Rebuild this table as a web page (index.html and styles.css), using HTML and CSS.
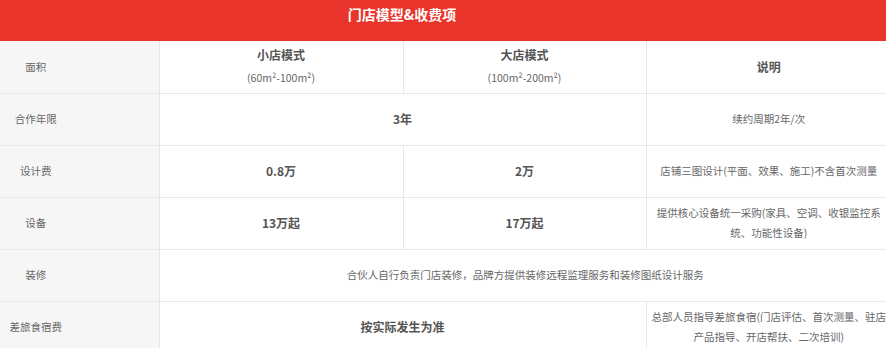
FILE: index.html
```html
<!DOCTYPE html>
<html lang="zh">
<head>
<meta charset="utf-8">
<title>门店模型&收费项</title>
<link rel="stylesheet" href="styles.css">
</head>
<body>
<div class="page">
  <div class="banner"><span class="banner-title">门店模型&amp;收费项</span></div>
  <table class="fee-table">
    <colgroup>
      <col class="c1"><col class="c2"><col class="c3"><col class="c4">
    </colgroup>
    <tr>
      <td class="label">面积</td>
      <td class="val"><div class="mode">小店模式</div><div class="size">(60m²-100m²)</div></td>
      <td class="val"><div class="mode">大店模式</div><div class="size">(100m²-200m²)</div></td>
      <td class="val"><div class="mode">说明</div></td>
    </tr>
    <tr>
      <td class="label">合作年限</td>
      <td class="val strong" colspan="2">3年</td>
      <td class="note">续约周期2年/次</td>
    </tr>
    <tr>
      <td class="label">设计费</td>
      <td class="val strong">0.8万</td>
      <td class="val strong">2万</td>
      <td class="note">店铺三图设计(平面、效果、施工)不含首次测量</td>
    </tr>
    <tr>
      <td class="label">设备</td>
      <td class="val strong">13万起</td>
      <td class="val strong">17万起</td>
      <td class="note">提供核心设备统一采购(家具、空调、收银监控系统、功能性设备)</td>
    </tr>
    <tr>
      <td class="label">装修</td>
      <td class="note" colspan="3">合伙人自行负责门店装修，品牌方提供装修远程监理服务和装修图纸设计服务</td>
    </tr>
    <tr>
      <td class="label">差旅食宿费</td>
      <td class="val strong" colspan="2">按实际发生为准</td>
      <td class="note nowrap">总部人员指导差旅食宿(门店评估、首次测量、驻店<br>产品指导、开店帮扶、二次培训)</td>
    </tr>
  </table>
</div>
</body>
</html>
```

FILE: styles.css
```css
html, body {
  margin: 0;
  padding: 0;
  background: #fff;
  overflow: hidden;
}

.page {
  width: 891px;
  font-family: "Noto Sans CJK SC", "Noto Sans", sans-serif;
  color: #666;
}

.banner {
  height: 41px;
  background: #e8342a;
  box-sizing: border-box;
  padding: 0 87px 0 0;
  text-align: center;
}

.banner-title {
  color: #fff;
  font-size: 14px;
  font-weight: bold;
  line-height: 28px;
}

.fee-table {
  width: 891px;
  table-layout: fixed;
  border-collapse: collapse;
}

.c1 { width: 159px; }
.c2 { width: 244px; }
.c3 { width: 243px; }
.c4 { width: 245px; }

.fee-table td {
  height: 52px;
  box-sizing: border-box;
  border-bottom: 1px solid #e8e8e8;
  border-left: 1px solid #e8e8e8;
  padding: 0 3px;
  text-align: center;
  vertical-align: middle;
  font-size: 10.5px;
  line-height: 20px;
  color: #666;
}

.fee-table td.label {
  border-left: none;
  background: #f6f6f6;
  padding: 0 87px 0 0;
}

.mode {
  font-size: 12px;
  font-weight: bold;
  color: #555;
  line-height: 22px;
}

.size {
  font-size: 10.5px;
  line-height: 24px;
  color: #666;
}

.fee-table td.strong {
  font-weight: bold;
  font-size: 12px;
  color: #555;
}

.nowrap {
  white-space: nowrap;
}
```
